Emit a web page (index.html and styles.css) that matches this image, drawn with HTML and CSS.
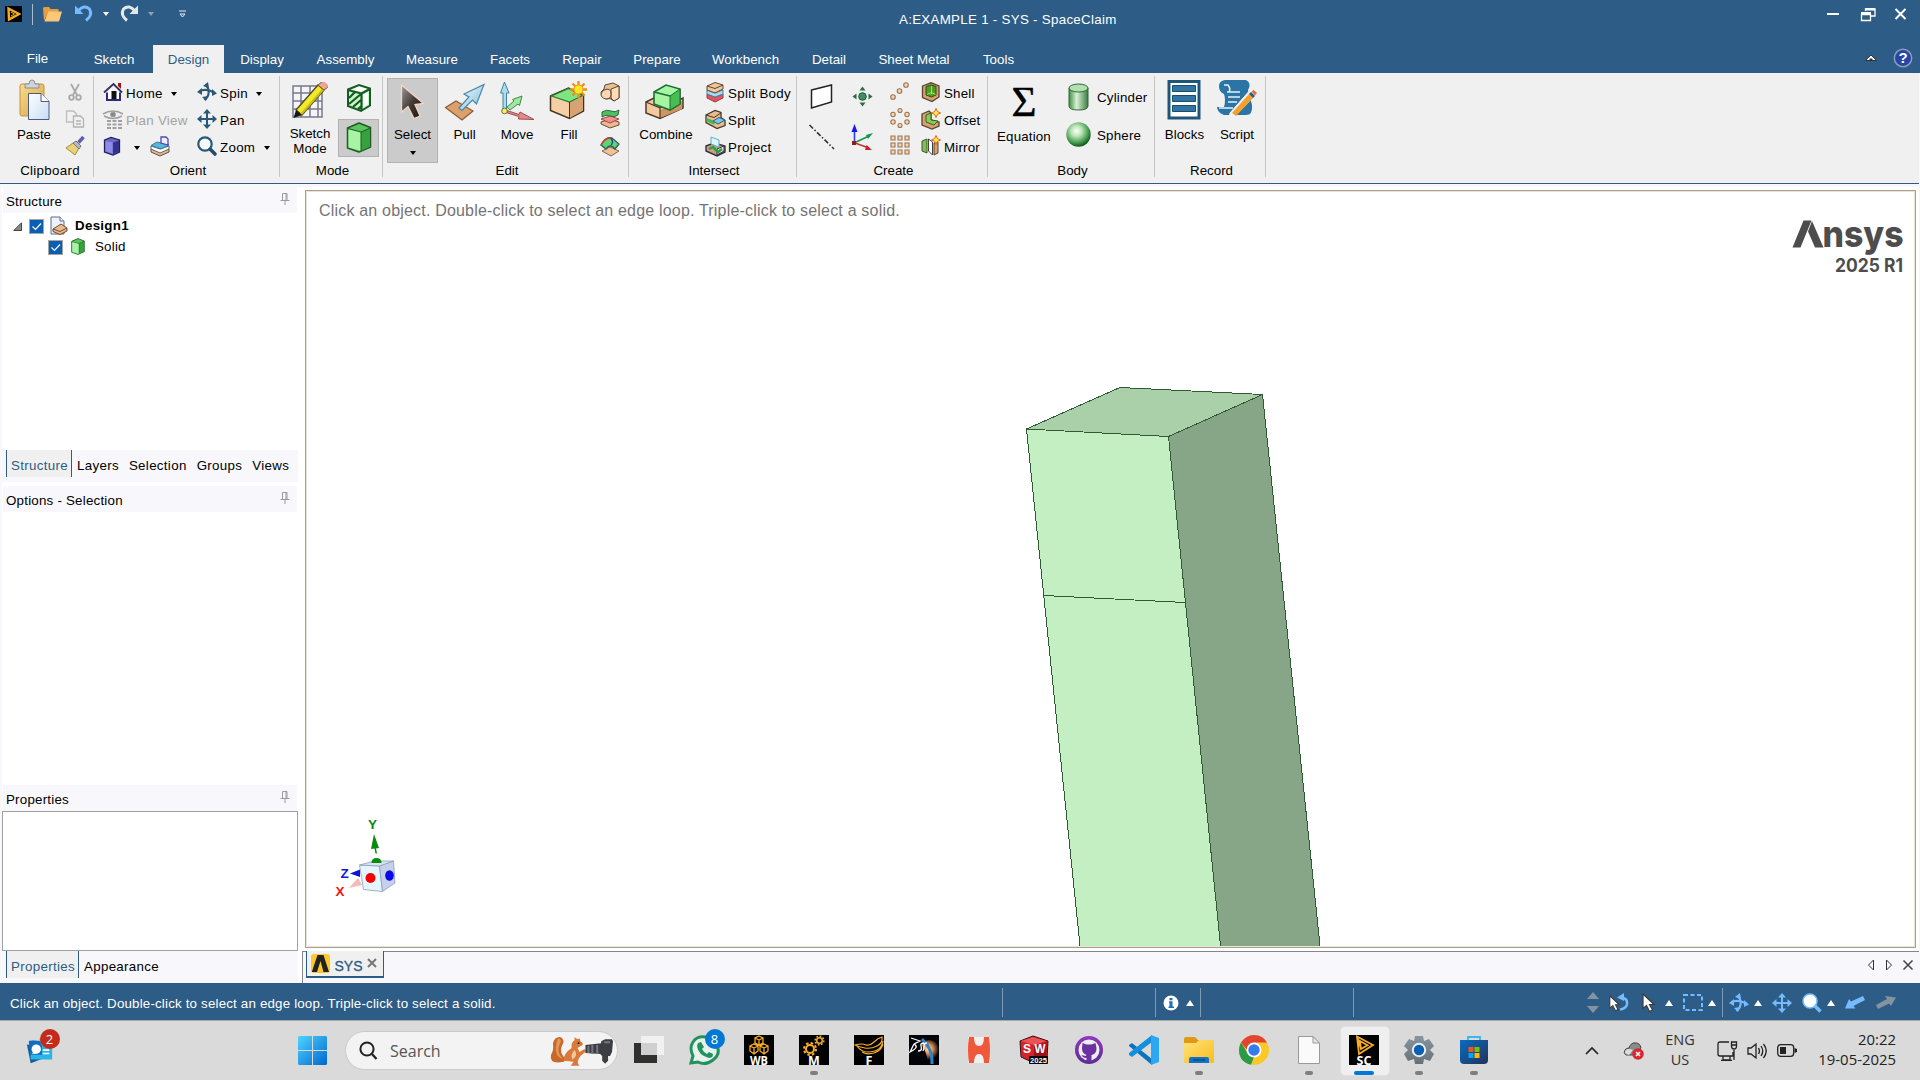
FILE: index.html
```html
<!DOCTYPE html>
<html lang="en">
<head>
<meta charset="utf-8">
<title>A:EXAMPLE 1 - SYS - SpaceClaim</title>
<link rel="stylesheet" href="styles.css">
</head>
<body>
<svg class="defs" width="0" height="0" aria-hidden="true">
  <defs>
    <linearGradient id="gold" x1="0" y1="0" x2="1" y2="1"><stop offset="0" stop-color="#f7dc8e"/><stop offset="1" stop-color="#d9a441"/></linearGradient>
    <linearGradient id="page" x1="0" y1="0" x2="1" y2="1"><stop offset="0" stop-color="#fff"/><stop offset="1" stop-color="#c9dcf5"/></linearGradient>
    <linearGradient id="arrowDark" x1="0" y1="0" x2="1" y2="1"><stop offset="0" stop-color="#a09a98"/><stop offset=".5" stop-color="#453a36"/><stop offset="1" stop-color="#17100c"/></linearGradient>
    <linearGradient id="ice" x1="0" y1="0" x2="1" y2="1"><stop offset="0" stop-color="#f2fcff"/><stop offset="1" stop-color="#7fbcdc"/></linearGradient>
    <linearGradient id="cyl" x1="0" x2="1"><stop offset="0" stop-color="#3f8f45"/><stop offset=".4" stop-color="#d9f2d4"/><stop offset="1" stop-color="#3d7a41"/></linearGradient>
    <radialGradient id="ball" cx=".42" cy=".36" r=".62"><stop offset="0" stop-color="#fff"/><stop offset=".35" stop-color="#b9e6b6"/><stop offset=".8" stop-color="#3f9648"/><stop offset="1" stop-color="#1c5b26"/></radialGradient>
    <linearGradient id="win" x1="0" y1="0" x2="1" y2="1"><stop offset="0" stop-color="#4fd4ff"/><stop offset="1" stop-color="#0067cf"/></linearGradient>
    <linearGradient id="folder" x1="0" y1="0" x2="1" y2="1"><stop offset="0" stop-color="#ffe27a"/><stop offset="1" stop-color="#f9bd1d"/></linearGradient>
    <linearGradient id="gear" x1="0" y1="0" x2="0" y2="1"><stop offset="0" stop-color="#8a949c"/><stop offset="1" stop-color="#66717a"/></linearGradient>
    <linearGradient id="store" x1="0" y1="0" x2="1" y2="1"><stop offset="0" stop-color="#0a6cc0"/><stop offset="1" stop-color="#23325c"/></linearGradient>
    <linearGradient id="purple" x1="0" y1="0" x2="0" y2="1"><stop offset="0" stop-color="#9335c0"/><stop offset="1" stop-color="#5c2f92"/></linearGradient>
    <radialGradient id="flare" cx=".45" cy=".45" r=".55"><stop offset="0" stop-color="#ffe3bd"/><stop offset=".45" stop-color="#d58a52"/><stop offset="1" stop-color="#030409"/></radialGradient>
    <symbol id="spin" viewBox="0 0 20 20"><g fill="none" stroke="currentColor" stroke-width="2.1"><path d="M2.500 9.500C6 7 12 7.500 17 10.500"/><path d="M8 3c5 3 5 11-.5 15"/></g><path fill="currentColor" d="M0 10l5-4v7zM20 11.500l-5-4.500v7zM6 4l5-4 1 6zM5 15l6-1-2 5z"/></symbol>
    <symbol id="pan" viewBox="0 0 20 20"><path fill="none" stroke="currentColor" stroke-width="2" d="M10 3v14M3 10h14"/><path fill="currentColor" d="M10 0l4 4.500H6zM10 20l4-4.500H6zM0 10l4.500-4v8zM20 10l-4.500-4v8z"/></symbol>
    <symbol id="star" viewBox="0 0 12 12"><path fill="#fff04a" stroke="#e9661d" stroke-width="1.200" d="M6 .5l1.600 3.700L11.500 6 7.600 7.600 6 11.500 4.400 7.600.5 6l3.900-1.800z"/></symbol>
    <symbol id="solid" viewBox="0 0 26 31"><path fill="#5cc45c" stroke="#1d5a25" stroke-width="1.500" stroke-linejoin="round" d="M1.500 6L13 1l11.500 4.500V25L13 30 1.500 26z"/><path fill="#a8f3a5" d="M2.500 7.500L15 10v19L2.500 25.500z"/><path fill="#37a23d" d="M15 10l9-4v18.500L15 29z"/><path fill="none" stroke="#1d5a25" d="M2 6.500L15 10l9.500-4M15 10v19"/></symbol>
    <symbol id="pin" viewBox="0 0 10 12"><path fill="none" stroke="#9a9a9a" d="M2.500 7V.5h4.500V7M6 1v6M.5 7.500h9M5 8v4"/></symbol>
    <symbol id="cursor" viewBox="0 0 14 20"><path fill="#fff" stroke="#3c3c3c" stroke-width="1.200" d="M1 1v14.500l3.500-3 3 6 3-1.500-3-5.500h4.500z"/></symbol>
  </defs>
</svg>

<header class="titlebar">
  <div class="quick">
    <svg class="q-app" viewBox="0 0 17 16"><rect width="17" height="16" fill="#000"/><path d="M3.500 2.500L14 8 4 13.500z" fill="none" stroke="#f7ac1c" stroke-width="2.400"/><path d="M6 6l3.500 2L6 10" fill="none" stroke="#f7ac1c"/></svg>
    <span class="q-sep"></span>
    <svg class="q-folder" viewBox="0 0 19 16"><path fill="#e89c3c" d="M0 2.500Q0 1 1.500 1H6l1.500 2h8v3H5L1 15z"/><path fill="#fbc879" d="M5 5.500h14L16 15.500H1.500z"/></svg>
    <svg class="q-undo" viewBox="0 0 18 17"><path fill="none" stroke="#75bbff" stroke-width="3" d="M3 6Q9-1 14.500 4 18 10 11 15.500"/><path fill="#75bbff" d="M0 .5V9h8.500z"/></svg>
    <i class="down white"></i>
    <svg class="q-redo" viewBox="0 0 18 17"><path fill="none" stroke="#e4e7ea" stroke-width="3" d="M15 6Q9-1 3.500 4 0 10 7 15.500"/><path fill="#e4e7ea" d="M18 .5V9H9.500z"/></svg>
    <i class="down grey"></i>
    <svg class="q-more" viewBox="0 0 7 8"><path fill="none" stroke="#e8eef4" d="M0 1h7M1 4h5L3.500 7z"/></svg>
  </div>
  <div class="window-title">A:EXAMPLE 1 - SYS - SpaceClaim</div>
  <svg class="window-buttons" viewBox="0 0 82 14"><g fill="none" stroke="#fff" stroke-width="2"><path d="M0 7h12M68.500 2l10 10M78.500 2l-10 10" transform="translate(1 0)"/></g><path fill="none" stroke="#fff" stroke-width="1.300" d="M39.500 4V2h9.500v7h-4M35.500 7.500h9v6h-9z"/><path fill="#fff" d="M35 5h10v3H35zM39 1h10v2.500H39z"/></svg>
</header>

<nav class="tabs">
  <span class="file">File</span><span>Sketch</span><span class="active">Design</span><span>Display</span><span>Assembly</span><span>Measure</span><span>Facets</span><span>Repair</span><span>Prepare</span><span>Workbench</span><span>Detail</span><span>Sheet Metal</span><span>Tools</span>
  <svg class="tab-tools" viewBox="0 0 48 20"><path fill="#fff" stroke="#333" d="M.5 12.500L6 7l5.500 5.500z"/><path fill="#333" d="M4.500 10.500h3v2h-3z"/><circle cx="38" cy="10" r="8.700" fill="#2546a8" stroke="#8f9cb5" stroke-width="1.500"/><text x="38" y="15.200" text-anchor="middle" font-size="15" font-weight="bold" fill="#fff">?</text></svg>
</nav>

<section class="ribbon">
  <div class="group clipboard">
    <div class="body">
      <div class="big"><svg width="40" height="40" viewBox="0 0 40 40"><rect x="6" y="4" width="24" height="32" rx="2" fill="url(#gold)" stroke="#c9933a"/><path fill="#cfd4d8" stroke="#8a8f94" d="M11 8V4h4q0-4 3-4t3 4h4v4z"/><path fill="url(#page)" stroke="#4b5b82" d="M14.500 13.500H27l8 8v18H14.500z"/><path fill="#fff" stroke="#4b5b82" d="M27 13.500v8h8"/></svg><span>Paste</span></div>
      <div class="minis">
        <svg viewBox="0 0 20 20"><g fill="none" stroke="#a9a9a9" stroke-width="1.800"><path d="M6 2l6 11M14 2L8 13"/><circle cx="6.500" cy="15.500" r="2.300"/><circle cx="13.500" cy="15.500" r="2.300"/></g></svg>
        <svg viewBox="0 0 20 20"><path fill="#f0f0f0" stroke="#bdbdbd" stroke-width="1.300" d="M1.500 2h7l3 3v8h-10z"/><path fill="#f0f0f0" stroke="#b3b3b3" stroke-width="1.300" d="M8.500 7h7l3 3v8h-10zM11 12h5M11 15h5"/></svg>
        <svg viewBox="0 0 20 20"><path fill="#e9d37a" stroke="#a58a35" d="M1 12l7-5 6 5-4 7-5-4z"/><path fill="#b5b8c8" stroke="#777" d="M8 7l3-2 5 5-2 3z"/><path stroke="#5f60ad" stroke-width="3.500" d="M13.500 6.500L18.500 1"/></svg>
      </div>
    </div>
    <div class="label">Clipboard</div>
  </div>

  <div class="group orient">
    <div class="body">
      <div class="rows">
        <div class="row"><svg viewBox="0 0 20 20"><path fill="#fff" stroke="#2b2a80" stroke-width="2" d="M4 9v9h13V9"/><path fill="#f4f4ff" stroke="#30305c" stroke-width="1.800" d="M1 10.500L10.500 2 19 10.500"/><path fill="#a11" d="M15 1h3v6l-3-3z"/><path fill="#111" d="M8.500 9h5v8h-5z"/></svg><span>Home</span><i class="down"></i></div>
        <div class="row off"><svg viewBox="0 0 20 20"><g fill="none" stroke="#a0a0a0"><path stroke-width="1.500" d="M0 5q10-6 20 0M1 7q9 5 18 0"/><circle cx="10" cy="5.500" r="2.500" fill="#888"/><path stroke-width="2" stroke-dasharray="4 1.500" d="M4 12h16M4 15.500h16M4 19h16"/></g></svg><span>Plan View</span></div>
        <div class="row"><svg viewBox="0 0 20 20"><path fill="#6a6acc" stroke="#20205c" stroke-width="1.300" d="M1.500 4L8 1.500 16.500 4v12L10 19 1.500 16z"/><path fill="#8d8de8" d="M2.500 5l7 1.500v11l-7-2.300z"/><path fill="#33338d" d="M10 6.500L16 4.500v11L10 18z"/></svg><i class="down after-cube"></i><svg viewBox="0 0 20 20"><path fill="#e9b88a" stroke="#5e5145" d="M1 13v3l9 4 9-4v-3l-9 3z"/><path fill="#fff" stroke="#666" d="M1 10v3l9 4 9-4v-3l-9 3z"/><path fill="#58b6da" stroke="#377b9c" d="M1 9.500L7 6l12 3-8 4z"/><path fill="#eef" stroke="#4a4ab0" stroke-width="1.300" d="M11 1h5l2 2v6l-7-2z"/></svg></div>
      </div>
      <div class="rows right">
        <div class="row"><svg class="navy"><use href="#spin"/></svg><span>Spin</span><i class="down"></i></div>
        <div class="row"><svg class="navy"><use href="#pan"/></svg><span>Pan</span></div>
        <div class="row"><svg viewBox="0 0 20 20"><circle cx="8" cy="8" r="6.700" fill="#f4f9fc" stroke="#2b5878" stroke-width="2.200"/><path stroke="#234d6c" stroke-width="3.600" stroke-linecap="round" d="M13.500 13.500l4.500 4.500"/></svg><span>Zoom</span><i class="down"></i></div>
      </div>
    </div>
    <div class="label">Orient</div>
  </div>

  <div class="group mode">
    <div class="body">
      <div class="big two"><svg width="40" height="40" viewBox="0 0 40 40"><path fill="#f5f5f8" stroke="#777a8c" stroke-width="1.500" d="M3 6h29v31H3zM11 6v31M20 6v31M28 6v31M3 13h29M3 21h29M3 29h29"/><path fill="#f3e92b" stroke="#4a4620" stroke-width="1.300" d="M6 30L28 5l6 5-22 25z"/><path fill="#c9bc17" d="M10 34l22-25 2 1-22 25z"/><path fill="#e8b186" stroke="#7b5a42" d="M28 5l3-2.500q6 0 6.500 5L34 10z"/><path fill="#f29aa0" d="M31 3q2-2 5 0t1 5z"/><path fill="#171717" d="M3.500 38l2.500-8 6 5z"/></svg><span>Sketch<br>Mode</span></div>
      <div class="mode-switch">
        <svg width="26" height="30" viewBox="0 0 26 30"><path fill="#c8f6c4" stroke="#175a25" stroke-width="2" d="M2 6.500L13 2l11 3.500v17L15 28 2 23z"/><path fill="#fff" d="M5 7l8-3.500 8 2.500-6 2.500zM17.500 11L22 9v12l-4.500 3z"/><path stroke="#175a25" stroke-width="2.200" fill="none" d="M2 7l13.500 3.500V28M15.500 10.500L24 6M3 15l6-6M3 21l12-10M7 24l8-7M12 26l4-3"/></svg>
        <div class="pressed"><svg width="26" height="31"><use href="#solid"/></svg></div>
      </div>
    </div>
    <div class="label">Mode</div>
  </div>

  <div class="group edit">
    <div class="body">
      <div class="big select"><svg width="40" height="40" viewBox="0 0 40 40"><path fill="url(#arrowDark)" stroke="#f1d6c5" stroke-width="1.300" d="M8.500 5v27l6.500-5.500 6 12 6-2.500-5-11.500 8.500-1z"/></svg><span>Select</span><i class="down"></i></div>
      <div class="big"><svg width="40" height="40" viewBox="0 0 40 40"><path fill="#dca06a" stroke="#8c5c37" stroke-width="1.200" d="M.5 27.500L11 21l17 10-11 9z"/><path fill="url(#ice)" stroke="#4b86a6" stroke-width="1.200" d="M14 28l10-11-5-3L39 4.500 31.500 24l-4-4L17 30.500z"/></svg><span>Pull</span></div>
      <div class="big"><svg width="40" height="40" viewBox="0 0 40 40"><path fill="#a8dcf0" stroke="#4a809b" d="M6 30V13H3.500L7.500 2 12 13H9.500v17z"/><path fill="#9fe8a2" stroke="#3f8a48" d="M10 27l7-6-1.500-1.500 9.500-3.500-2.500 9.500-1.500-1.500-8 6z"/><path fill="#e08a8d" stroke="#a34b50" d="M10 30.500l12 4 1-2.500 14 7.500-15.500-.5.500-2.500-13-4z"/><circle cx="7.500" cy="31" r="2.800" fill="#f2ef6b" stroke="#77702b"/></svg><span>Move</span></div>
      <div class="big"><svg width="40" height="40" viewBox="0 0 40 40"><path fill="#f5cfa6" stroke="#453121" stroke-width="1.500" d="M1.500 16l18-8 15 7v16L20.500 38.500l-19-8z"/><path fill="#d8a373" d="M21 22.500l13-6.500v14.500L21 38z"/><path fill="#7ee580" stroke="#2b7535" stroke-width="1.200" d="M2.500 16l17-7.500 14 7L20.500 22z"/><path stroke="#453121" d="M20.500 22v16"/><path stroke="#ef8d1c" stroke-width="2.300" d="M29.500 1v17M21 9.500h17M23.500 3.500l12 12M35.500 3.500l-12 12"/><circle cx="29.500" cy="9.500" r="4.500" fill="#ffe81f" stroke="#f09a20"/></svg><span>Fill</span></div>
      <div class="minis">
        <svg viewBox="0 0 20 20"><path fill="#e9bf94" stroke="#5d4634" d="M5 3l8-2 6 3v12l-5 3-4-2.500L6 17l-4-3-1-4 3-3z"/><path fill="#ffdcb6" stroke="#5d4634" d="M11 7l8-3v12l-5 3-3-3z"/><path fill="#f7d7b4" stroke="#5d4634" d="M4 8q7-3 7 4 0 5-5 5-5-1-5-5 1-3 3-4z"/></svg>
        <svg viewBox="0 0 20 20"><path fill="#eab98c" stroke="#6a4c35" d="M1 13l9-3 9 3v3l-9 3-9-4z"/><path fill="#f58f93" stroke="#a8474b" d="M1 10l9-3 9 3-9 4z"/><path fill="#4fbf61" stroke="#247036" d="M2 3q5-3 9-1t8-1l-1 5q-4 3-8 1t-8 1z"/></svg>
        <svg viewBox="0 0 20 20"><path fill="#efc197" stroke="#8c6749" d="M2 15l8-4 9 4-8 5z"/><path fill="#5fd472" stroke="#2e5c5e" stroke-width="1.300" d="M1 9Q6 0 12 2l7 6-4 5Q10 7 6 13z"/><path fill="none" stroke="#d8342c" stroke-width="1.500" d="M1 9Q5 1 11 2"/><path fill="none" stroke="#26479a" stroke-width="1.500" d="M11 2q3 5 0 7"/></svg>
      </div>
    </div>
    <div class="label">Edit</div>
  </div>

  <div class="group intersect">
    <div class="body">
      <div class="big"><svg width="40" height="40" viewBox="0 0 40 40"><path fill="#f3caa0" stroke="#4c3827" stroke-width="1.500" d="M0 22l8-4 20 5 9-5v10L14 38.500 0 33z"/><path fill="#cb9566" d="M14 30l22-9v8L14 38z"/><path stroke="#4c3827" stroke-width="1.200" fill="none" d="M0 22l14 6v10M14 28l5-2"/><path fill="#a5f5a5" stroke="#1f6e30" stroke-width="1.600" d="M8 12l12-7 14 4v15l-10 6-16-6z"/><path fill="#48bc55" stroke="#1f6e30" d="M24 16l10-7v15l-10 6z"/><path fill="none" stroke="#1f6e30" stroke-width="1.300" d="M8 12l16 4"/></svg><span>Combine</span></div>
      <div class="rows">
        <div class="row"><svg viewBox="0 0 20 20"><path fill="#e05560" stroke="#933d44" d="M2 12l8 3 8-3v4l-8 4-8-4z"/><path fill="#a9dcf2" stroke="#4583a2" d="M2 8l8 3 8-3v4l-8 3-8-3z"/><path fill="#f0c79c" stroke="#5d4634" d="M2 4l8-3.500L18 3v4l-8 4-8-3z"/><path fill="none" stroke="#5d4634" d="M2 4l8 2.500L18 3"/></svg><span>Split Body</span></div>
        <div class="row"><svg viewBox="0 0 20 20"><path fill="#e9bc90" stroke="#45352a" stroke-width="1.300" d="M1 6l9-4.500 6 2v5l4 3v5l-8 3-11-6z"/><path fill="#42b45a" d="M1.500 9l8 3v4l-8-4z"/><path fill="#7cc6ea" stroke="#2a5f7d" d="M8 12l6-3.500 6 2.500-7 4z"/><path fill="none" stroke="#45352a" d="M1 6l8 2.500L16 4"/></svg><span>Split</span></div>
        <div class="row"><svg viewBox="0 0 20 20"><path fill="#cda078" stroke="#343044" stroke-width="1.400" d="M1 10l8-3 11 3v6l-8 4-11-5z"/><path fill="#e9eaf5" stroke="#343044" d="M12 13l7-3v5l-7 4z"/><path fill="none" stroke="#28a046" stroke-width="2.500" d="M4 13l4-2 5 5 4-3"/><path fill="#dff3fa" stroke="#5ab0cf" d="M6 1l8 3v7L6 8z"/></svg><span>Project</span></div>
      </div>
    </div>
    <div class="label">Intersect</div>
  </div>

  <div class="group create">
    <div class="body">
      <div class="pair"><svg viewBox="0 0 30 30"><path fill="#fff" stroke="#222" stroke-width="1.500" d="M5.500 9l20-5v17l-20 6z"/></svg><svg viewBox="0 0 30 30"><path stroke="#333" stroke-width="1.600" stroke-dasharray="5 2 1.500 2" d="M3.500 1L28 25"/></svg></div>
      <div class="pair"><svg viewBox="0 0 30 30"><circle cx="15.500" cy="15.500" r="3.800" fill="#3f8f63" stroke="#23573b"/><path fill="#2b6b4a" d="M15.500 5.500l3 4h-6zM15.500 25.500l3-4h-6zM5.500 15.500l4-3v6zM25.500 15.500l-4-3v6z"/></svg><svg viewBox="0 0 30 30"><path fill="none" stroke="#3a3af5" stroke-width="1.600" d="M7.500 19V6"/><path fill="none" stroke="#16934d" stroke-width="1.500" d="M7 19l15-7"/><path fill="none" stroke="#c83030" stroke-width="1.500" d="M8 19l14 5"/><path fill="#1717f0" d="M7.500 0l3 8h-6z"/><path fill="#16934d" d="M26 9l-5 6-2-4z"/><path fill="#c5242e" d="M25 26l-7 0 1.500-5z"/><rect x="5" y="17" width="4" height="4" fill="#8b1d1d"/></svg></div>
      <div class="minis peach">
        <svg viewBox="0 0 20 20"><circle cx="3" cy="16" r="2.300"/><circle cx="9.500" cy="10" r="2.300"/><circle cx="16" cy="4" r="2.300"/></svg>
        <svg viewBox="0 0 20 20"><circle cx="10" cy="2.500" r="2"/><circle cx="3" cy="6.500" r="2.200"/><circle cx="17" cy="6.500" r="2.200"/><circle cx="3" cy="14" r="2.200"/><circle cx="17" cy="14" r="2.200"/><circle cx="10" cy="17.500" r="2"/></svg>
        <svg viewBox="0 0 20 20"><path d="M1 1h4v4H1zM8 1h4v4H8zM15 1h4v4h-4zM1 8h4v4H1zM8 8h4v4H8zM15 8h4v4h-4zM1 15h4v4H1zM8 15h4v4H8zM15 15h4v4h-4z"/></svg>
      </div>
      <div class="rows">
        <div class="row"><svg viewBox="0 0 20 20"><path fill="#d7a16f" stroke="#594230" stroke-width="1.300" d="M1.500 4L10 .8 18 4v11l-7 4.500-9.500-4z"/><path fill="#4f9e24" stroke="#26500f" d="M5 4.500L10 3l5 1.500V13l-4.500 2L5 13z"/><path stroke="#a7dc73" fill="none" d="M10.500 4v8M6 12.500l4.500-2 4 2"/></svg><span>Shell</span></div>
        <div class="row"><svg viewBox="0 0 20 20"><path fill="#d7a16f" stroke="#594230" stroke-width="1.300" d="M1 5l7-3 2 2v7l8 2v4l-7 3-10-4z"/><path fill="#89c95e" stroke="#33671d" d="M5 6l5-2v7l7 1-4 4-8-3z"/><use href="#star" x="10" y="-1" width="10" height="10"/></svg><span>Offset</span></div>
        <div class="row"><svg viewBox="0 0 20 20"><path fill="#86b957" stroke="#395b27" d="M1 5l5-2v14l-5-2z"/><path fill="#fff" stroke="#444" d="M7.500 3l4 3v13l-4-4z"/><path fill="#d7a16f" stroke="#594230" d="M13 7l4-1v11l-4 2z"/><use href="#star" x="10" y="-1" width="10" height="10"/></svg><span>Mirror</span></div>
      </div>
    </div>
    <div class="label">Create</div>
  </div>

  <div class="group solids">
    <div class="body">
      <div class="big equation"><b class="sigma">Σ</b><span>Equation</span></div>
      <div class="shapes">
        <div class="row"><svg viewBox="0 0 27 30"><path fill="url(#cyl)" stroke="#2c6b35" d="M4 6v18q0 4 9.500 4t9.500-4V6z"/><ellipse cx="13.500" cy="6" rx="9.500" ry="4" fill="#b4dfb0" stroke="#2c6b35"/></svg><span>Cylinder</span></div>
        <div class="row"><svg viewBox="0 0 27 30"><circle cx="13.500" cy="14.500" r="12.200" fill="url(#ball)"/></svg><span>Sphere</span></div>
      </div>
    </div>
    <div class="label">Body</div>
  </div>

  <div class="group record">
    <div class="body">
      <div class="big"><svg width="40" height="40" viewBox="0 0 40 40"><path fill="#fff" stroke="#1e5679" stroke-width="3" d="M4 1.500h30v36.500H4z"/><path fill="#2f74a3" stroke="#1a4c6d" d="M7.500 5.500h23v6h-23zM7.500 15.500h23v6h-23zM7.500 25.500h23v6h-23z"/></svg><span>Blocks</span></div>
      <div class="big"><svg width="40" height="40" viewBox="0 0 40 40"><path fill="#2b75a6" d="M2 6q0-5 6-6h21q6 3 2 10l4 15q1 10-6 10H7q-7-3-7-8h7Q9 20 7 14 2 12 2 6z"/><path stroke="#e5f1fa" stroke-width="1.500" fill="none" d="M7 5h4q3 4 1 7M10 12h13M11 17h12M11 22h9M2 28h14"/><path fill="#f2f2f2" stroke="#f2f2f2" d="M12 40l1-7L34 9l5 5-21 22z"/><path fill="#f5a02b" d="M15 33l17-19 4 4-17 18z"/><path fill="#235d86" d="M32 14l2-2 4 4-2 2z"/><path fill="#e66a44" d="M34.500 11.500l2-1.500 3.500 3-2 2.500z"/></svg><span>Script</span></div>
    </div>
    <div class="label">Record</div>
  </div>
</section>

<main class="work">
  <aside class="side">
    <div class="panel-head"><span>Structure</span><svg><use href="#pin"/></svg></div>
    <div class="tree">
      <div class="node"><svg class="twisty" viewBox="0 0 9 9"><path fill="#8a8a8a" stroke="#444" d="M8.500.8v7.700H.8z"/></svg><i class="check"><svg viewBox="0 0 15 15"><path d="M3.500 7.500l3 3 5.500-6" fill="none" stroke="#fff" stroke-width="1.200"/></svg></i><svg class="ticon" viewBox="0 0 18 19"><path fill="#eef2fb" stroke="#5e6a92" d="M1 1h9l4 4v13H1z"/><path fill="#fff" stroke="#5e6a92" d="M10 1v4h4"/><path fill="#e9ba8a" stroke="#6d4d35" d="M3 13l8-5 6 4v3l-7 3.500-7-3z"/><path fill="none" stroke="#6d4d35" d="M3 13l7 2.500 7-3.500"/></svg><b>Design1</b></div>
      <div class="node child"><i class="check"><svg viewBox="0 0 15 15"><path d="M3.500 7.500l3 3 5.500-6" fill="none" stroke="#fff" stroke-width="1.200"/></svg></i><svg class="ticon"><use href="#solid"/></svg><span>Solid</span></div>
    </div>
    <div class="panel-tabs"><span class="active">Structure</span><span>Layers</span><span>Selection</span><span>Groups</span><span>Views</span></div>
    <div class="panel-head second"><span>Options - Selection</span><svg><use href="#pin"/></svg></div>
    <div class="options"></div>
    <div class="panel-head"><span>Properties</span><svg><use href="#pin"/></svg></div>
    <div class="properties"></div>
    <div class="panel-tabs last"><span class="active">Properties</span><span>Appearance</span></div>
  </aside>

  <div class="doc">
    <div class="viewport">
      <svg class="scene" viewBox="307 192 1607 754" width="1607" height="754">
        <g stroke="#2f5a33" stroke-width="1" stroke-linejoin="round" shape-rendering="crispEdges">
          <path fill="#c4efc3" d="M1026.500 429l142 7.500L1222 960h-140.500z"/>
          <path fill="#87a587" d="M1168.500 436.500l94-42L1321.500 960H1222z"/>
          <path fill="#a9d0a9" d="M1026.500 429l93.500-41.500 142.500 7-94 42z"/>
          <path d="M1043.500 595.500l141.500 7"/>
        </g>
        <text class="hint" x="319" y="216">Click an object. Double-click to select an edge loop. Triple-click to select a solid.</text>
        <g fill="#4d4d4d">
          <text class="brand" y="247"><tspan x="1793">A</tspan><tspan x="1822.500" textLength="81" lengthAdjust="spacingAndGlyphs">nsys</tspan></text>
          <path fill="#fff" d="M1790 218h34v31h-34z"/>
          <path d="M1792.500 247.500l11-27h8l-11 27zM1812 221l11.500 26.500h-8.500l-7-16z"/>
          <text class="release" x="1835" y="271.500" textLength="68" lengthAdjust="spacingAndGlyphs">2025 R1</text>
        </g>
        <g class="triad">
          <text x="368" y="829" fill="#0a8a0a">Y</text><text x="340.500" y="878" fill="#1414e0">Z</text><text x="335.500" y="896" fill="#ee1515">X</text>
          <path fill="#0a8a0a" d="M374 834l5 14-3 .5 1 5h-1.500l-1-5-3.500.5z"/>
          <path fill="#f7b9b9" d="M349 888l9-10 4 7z"/><path fill="#1010d8" d="M350 873.500l10-4v7.500z"/>
          <g stroke="#8e9cbd" stroke-width=".8"><path fill="#e4f6fd" d="M359.500 865l20 1 3 25.500-19-2z"/><path fill="#c7d0ea" d="M379.500 866l14-5 1.500 22-12.500 8.500z"/><path fill="#d5e4f3" d="M359.500 865l15-4h19l-14 5z"/></g>
          <path fill="#0a8a0a" d="M371.500 863q0-5 5-5t5 5z"/><circle cx="370.500" cy="878" r="5" fill="#f20000"/><ellipse cx="389.500" cy="875.500" rx="4.300" ry="5.300" fill="#0808e8"/>
        </g>
      </svg>
    </div>
    <div class="doc-tabs">
      <div class="doc-tab"><svg viewBox="0 0 19 19"><rect width="19" height="19" rx="3" fill="#ffc92a"/><path fill="#222" d="M.8 18L6.500 1h6L18 18h-5.500L9.500 7 6 18z"/></svg><span>SYS</span><svg class="x" viewBox="0 0 10 10"><path stroke="#777" stroke-width="2" d="M1 1l8 8M9 1L1 9"/></svg></div>
      <svg class="doc-nav" viewBox="0 0 48 12"><path fill="none" stroke="#333" d="M6.500 1v10L1.500 6zM19.500 1v10l5-5z"/><path stroke="#444" stroke-width="1.500" d="M36.500 1.500l9 9M45.500 1.500l-9 9"/></svg>
    </div>
  </div>
</main>

<footer class="status">
  <span class="msg">Click an object. Double-click to select an edge loop. Triple-click to select a solid.</span>
  <span class="cell blank"></span>
  <span class="cell info"><svg width="16" height="16" viewBox="0 0 16 16"><circle cx="8" cy="8" r="7.500" fill="#fff"/><path fill="#1f6fb5" d="M6.500 3h3v2.200h-3zM6 6.200h3.500v5.300H11V13H5.500v-1.500h1V7.600H6z"/></svg><i class="up"></i></span>
  <span class="cell third"></span>
  <span class="cell tools">
    <svg class="t1" viewBox="0 0 12 21"><path fill="#8493a0" d="M6 0l6 7H0zM6 21l6-7H0z"/></svg>
    <svg class="t2" viewBox="0 0 20 20"><path fill="none" stroke="#75bbff" stroke-width="2.500" d="M11 4.500q8 0 7 7-1 4-7 5"/><path fill="#75bbff" d="M8 4.500L15 0v8z"/><use href="#cursor" width="12" height="19" y="1"/></svg>
    <svg class="t3"><use href="#cursor"/></svg>
    <i class="up"></i>
    <svg class="t4" viewBox="0 0 20 17"><path fill="none" stroke="#75bbff" stroke-width="2" stroke-dasharray="4 2.500" d="M1 1h18v15H1z"/></svg>
    <i class="up"></i>
    <span class="bar"></span>
    <svg class="t5 sky"><use href="#spin"/></svg>
    <i class="up"></i>
    <svg class="t6 sky"><use href="#pan"/></svg>
    <svg class="t7" viewBox="0 0 20 20"><path stroke="#75bbff" stroke-width="3.500" d="M12 12l6.500 6.500"/><circle cx="8" cy="8" r="7" fill="#fff" stroke="#75bbff" stroke-width="1.500"/></svg>
    <i class="up"></i>
    <svg class="t8" viewBox="0 0 20 14"><path fill="#75bbff" d="M0 12.500L4 3l2 2.500L18 0l2 4L8.500 10l2 2.500z"/></svg>
    <svg class="t9" viewBox="0 0 20 14"><path fill="#8493a0" d="M20 1.500L9 0l2 3L0 9l2 4 11-5.500 2 2.500z"/></svg>
  </span>
</footer>

<div class="taskbar">
  <div class="widgets"><svg viewBox="0 0 30 32"><path fill="#155d8b" d="M1 9l4 20 16-6V12z"/><path fill="#1273c8" d="M3 5h13v19H5z"/><path fill="#56b85b" d="M14 2l4 4v6z"/><path fill="#28b5e8" d="M14 8h14v17H5V12z"/><path fill="#0f6cc0" d="M3 6q8-4 14 4v10H5z"/><circle cx="11" cy="14" r="5" fill="#fff"/><path fill="#fff" d="M6 19l3-3 2 3zM18 14h7v2h-7zM18 18h7v1.500h-7z"/></svg><span class="badge red">2</span></div>
  <svg class="start" viewBox="0 0 29 29"><path fill="url(#win)" d="M1 0h13v14H0V1zM15 0h13l1 1v13H15zM0 15h14v14H1l-1-1zM15 15h14v13l-1 1H15z"/></svg>
  <div class="search">
    <svg class="mag" viewBox="0 0 19 19"><circle cx="8" cy="8" r="6.600" fill="none" stroke="#222" stroke-width="2"/><path stroke="#222" stroke-width="2.300" d="M13 13l4.500 5"/></svg>
    <span>Search</span>
    <svg class="squirrel" viewBox="0 0 64 30"><path fill="#c7682d" d="M14 26Q-1 29 1 19 4 14 3 7 5 0 11 1q5 3 1 9-3 7 4 13z"/><path fill="#e59556" d="M8 2q5 1 2 6-4 8 3 15Q2 20 8 2z"/><path fill="#d9793a" d="M14 25q-1-7 8-13-1-6 3-8V1l3 2 2-1 1 3q3 2 2 4l-5 3 2 4 5-3 2 2-6 5-2 3q-2 4 1 7h-9l3-4z"/><path fill="#f3c8a0" d="M25 14q4 5-2 10-3-5 2-10z"/><circle cx="29" cy="7" r="1" fill="#111"/><path fill="#3c3e43" d="M36 9l16-2V5l4-2h7l1 2-1 11-2 4h-2v5l-3 3-3-3v-5l-2-2-15-1z"/><path fill="#74777e" d="M38 10h2v7h-2zM42 9h2v9h-2zM47 9h2v9h-2zM55 5h6v2h-6z"/></svg>
  </div>
  <div class="apps">
    <div class="app"><svg viewBox="0 0 30 30"><path fill="#30302f" d="M0 8h23v20H0z"/><path fill="#f5f5f5" opacity=".85" d="M7 1h23v19H7z"/><path fill="#cfcfcf" d="M7 8h16v12H7z"/></svg></div>
    <div class="app"><svg viewBox="0 0 30 30"><path fill="#e7f2ec" stroke="#22925e" stroke-width="3" d="M2 28l2-7Q0 13 4 7t12-5 12 9-4 14-15 2z"/><path fill="#22925e" d="M9 8l3-1 3 5-2 2q2 4 5 5l2-2 4 2q0 4-4 4Q9 20 8 11z"/></svg><span class="badge blue">8</span></div>
    <div class="app"><svg viewBox="0 0 30 30"><rect width="30" height="30"/><g fill="none" stroke="#f5ac27" stroke-width="1.300"><path d="M15 1l4 2v5l-4 2-4-2V3zM10 9l4 2v5l-4 3-4-3v-5zM20 9l4 2v5l-4 3-4-3v-5zM11 3l4 2 4-2M15 5v5M6 11l4 2 4-2M10 13v6M16 11l4 2 4-2M20 13v6"/></g><text x="15" y="30" text-anchor="middle" textLength="18" lengthAdjust="spacingAndGlyphs">WB</text></svg></div>
    <div class="app run"><svg viewBox="0 0 30 30"><rect width="30" height="30"/><g fill="none" stroke="#f5ac27"><circle cx="11" cy="14" r="4" stroke-width="2"/><circle cx="11" cy="14" r="6" stroke-width="2" stroke-dasharray="2.500 2.200"/><circle cx="20.500" cy="5.500" r="2.800" stroke-width="1.500"/><circle cx="20.500" cy="5.500" r="4.300" stroke-width="1.600" stroke-dasharray="1.800 1.500"/></g><text x="15" y="30" text-anchor="middle">M</text></svg></div>
    <div class="app"><svg viewBox="0 0 30 30"><rect width="30" height="30"/><g fill="none" stroke="#f5ac27" stroke-width="1.200"><path d="M1 10q7-2 11 0 4 1 8-3t8-5q1 6-5 9-6 3-12 2T1 10z"/><path d="M3 11q4 6 11 6 13 0 15-11M8 17q5 3 12 1 7-2 9-9"/></g><text x="15" y="30" text-anchor="middle">F</text></svg></div>
    <div class="app"><svg viewBox="0 0 30 30"><rect width="30" height="30" fill="#030409"/><circle cx="20" cy="15" r="10" fill="url(#flare)"/><path fill="#030409" d="M6 4q12 8 13 26H5z"/><path fill="none" stroke="#2a86c8" stroke-width="3" d="M13 4q11 10 10 25"/><g fill="none" stroke="#fff" stroke-width="1.300"><path d="M2 3l9 3-6 3M5 9q6 3-4 8l4-8M15 8q-4 0-3 3t0 4-3 1M18 8q-3 0-3 3t-1 5"/></g></svg></div>
    <div class="app"><svg viewBox="0 0 30 30"><path fill="#fafafa" opacity=".7" d="M4 2h22v26H4z"/><path fill="#f0583a" d="M5 2h5q0 9 5 9t5-9h5q2 13 0 26h-5q0-9-5-9t-5 9H5Q3 15 5 2z"/></svg></div>
    <div class="app"><svg viewBox="0 0 30 30"><path fill="#d5232b" stroke="#331013" d="M1 6L14 1l15 5-1 18-13 4L2 22z"/><path fill="#ef5252" d="M2 6l12-4 13 4-12 4z"/><path fill="#9b141c" d="M15 11l13-4-1 16-12 4z"/><g fill="#fff"><text class="sw" x="4" y="18">S</text><text class="sw" x="15.500" y="17.500" textLength="11" lengthAdjust="spacingAndGlyphs">W</text></g><rect x="10" y="21" width="19" height="8" rx="1"/><text class="tiny" x="11" y="28" textLength="17" lengthAdjust="spacingAndGlyphs">2025</text></svg></div>
    <div class="app"><svg viewBox="0 0 30 30"><circle cx="15" cy="15" r="14" fill="url(#purple)"/><circle cx="15" cy="15" r="10.500" fill="#eee"/><path fill="#6b31a0" d="M8.500 8l4 1.500h5l4-1.500 1 5q0 6-5 7v6h-5v-3q-4 0-5-3l4 1 1-1q-5-2-4.500-7z"/></svg></div>
    <div class="app"><svg viewBox="0 0 30 30"><path fill="#0c72bd" d="M0 10l3-2 20 16v6L0 11z"/><path fill="#1290dd" d="M0 20l3 2L23 7V0L0 18z"/><path fill="#2ba7f3" d="M22 0l8 3v24l-8 3z"/></svg></div>
    <div class="app run"><svg viewBox="0 0 30 30"><path fill="#dd9a12" d="M0 4q0-2 2-2h9l3 3h16v5H0z"/><path fill="url(#folder)" d="M0 8h12l3-3h15v22q0 1-1 1H1q-1 0-1-1z"/><path fill="#1272c3" d="M5 28v-4q0-2 2-2h16q2 0 2 2v4z"/><path stroke="#074d8c" stroke-width="1.500" d="M9 25h12"/></svg></div>
    <div class="app"><svg viewBox="0 0 30 30"><circle cx="15" cy="15" r="15" fill="#fbc927"/><path fill="#e24333" d="M15 15H8L2 7.500Q7 0 15 0q9 0 13 7.500H15z"/><path fill="#2b9a48" d="M2 7.500L9 19l6 3-3 7.700Q0 27 0 15q0-4 2-7.500z"/><circle cx="15" cy="15" r="7.500" fill="#fff"/><circle cx="15" cy="15" r="5.700" fill="#347bf0"/></svg></div>
    <div class="app run"><svg viewBox="0 0 30 30"><path fill="#fafafa" stroke="#999" d="M4.500 1.500H19l6.500 7v20h-21z"/><path fill="#e6e6e6" stroke="#999" d="M19 1.500V8h6.500z"/></svg></div>
    <div class="app current"><svg viewBox="0 0 30 30"><rect width="30" height="30"/><path fill="none" stroke="#f5ac27" stroke-width="1.800" d="M8 1.500L24 10 10 19zM11 6l7.500 4.200L12 14zM8 1.500l4 12.500"/><text x="15" y="30" text-anchor="middle">SC</text></svg></div>
    <div class="app run"><svg viewBox="0 0 30 30"><path fill="url(#gear)" d="M11 1h8l1 5 5-2 5 7-4 4 4 4-4 7-6-2-1 5h-8l-1-5-6 2-4-7 4-4-4-4 5-7 5 2z"/><circle cx="15" cy="15" r="7.200" fill="#e9eef2"/><circle cx="15" cy="15" r="5.200" fill="#0c60b0"/></svg></div>
    <div class="app run"><svg viewBox="0 0 30 30"><path fill="none" stroke="#39b8ee" stroke-width="1.800" d="M9 6V2h12v4"/><path fill="url(#store)" d="M1 5h28v20q0 4-4 4H5q-4 0-4-4z"/><path fill="#f35325" d="M9.500 12h5v5h-5z"/><path fill="#81bc06" d="M15.500 12h5v5h-5z"/><path fill="#05a6f0" d="M9.500 18h5v5h-5z"/><path fill="#ffba08" d="M15.500 18h5v5h-5z"/></svg></div>
  </div>
  <div class="tray">
    <svg class="chev" viewBox="0 0 14 8"><path fill="none" stroke="#222" stroke-width="1.700" d="M1 7l6-6 6 6"/></svg>
    <svg class="cloud" viewBox="0 0 21 18"><path fill="#8b8b8b" stroke="#444" d="M3 13q-3-2-1-5 1-2 4-2 2-6 7-5 4 0 5 5l-8 7z"/><path fill="#dcdcdc" d="M3 12q-2-2 0-4t7 0l-4 5z"/><circle cx="15" cy="12" r="5.800" fill="#d9262e"/><path stroke="#fff" stroke-width="1.500" d="M13 10l4 4M17 10l-4 4"/></svg>
    <div class="lang">ENG<br>US</div>
    <svg class="net" viewBox="0 0 20 20"><g fill="none" stroke="#222" stroke-width="1.300"><path d="M12 1H3Q1 1 1 3v10q0 2 2 2h13v-4M6 15v4h7v-4M4 19.300h11M17 9v10"/><path d="M14.500 1h5v4q0 3-2.500 3t-2.500-3zM14.500 4h5"/></g></svg>
    <svg class="vol" viewBox="0 0 20 18"><path fill="none" stroke="#222" stroke-width="1.300" d="M1 6h3l5-4v14l-5-4H1zM11.500 6q2 3 0 6M14 4q3.500 5 0 10M16.500 2q5.500 7 0 14"/></svg>
    <svg class="bat" viewBox="0 0 20 13"><rect x=".7" y=".7" width="16" height="11.600" rx="3" fill="none" stroke="#222" stroke-width="1.300"/><path fill="#222" d="M3 3h6v7H3zM17.500 4l2.500 1v3l-2.500 1z"/></svg>
    <div class="clock">20:22<br>19-05-2025</div>
  </div>
</div>
</body>
</html>
```
FILE: styles.css
```css
* { box-sizing: border-box; }
body {
  margin: 0; width: 1920px; height: 1080px; overflow: hidden;
  display: flex; flex-direction: column; background: #f7f7fc; color: #000;
  font: 13.33px/16px "Liberation Sans", Arial, sans-serif;
}
svg { display: block; flex: none; overflow: visible; }
.defs { position: absolute; }

.down, .up { width: 0; height: 0; flex: none; border: 3.5px solid transparent; border-bottom: 0; border-top: 4px solid #000; }
.down.white { border-top-color: #fff; }
.down.grey { border-top-color: #8ba0b3; }
.up { border: 4.5px solid transparent; border-top: 0; border-bottom: 6px solid #fff; }

/* Title bar */
.titlebar { height: 45px; flex: none; background: #2d5c86; color: #fff; display: grid; grid-template-columns: 899px 1fr 106px; align-items: start; }
.quick { display: flex; align-items: center; height: 27px; padding-left: 5px; }
.q-app { width: 17px; height: 16px; }
.q-sep { width: 1px; height: 21px; background: #a9bccd; margin: 2px 10px 0 10px; }
.q-folder { width: 19px; height: 16px; margin-right: 13px; }
.q-undo, .q-redo { width: 18px; height: 17px; margin-right: 10px; }
.q-redo { margin-left: 10.5px; }
.q-more { width: 7px; height: 8px; margin-left: 25px; }
.window-title { padding-top: 12px; letter-spacing: .29px; }
.window-buttons { width: 82px; height: 14px; margin: 7px 0 0 12px; }

.tabs { height: 28px; flex: none; background: #2d5c86; color: #fff; display: grid; grid-template-columns: 75px 78px 71px 76px 91px 82px 74px 70px 80px 97px 70px 100px 69px 1fr; text-align: center; line-height: 29px; }
.tabs .file { line-height: 27px; }
.tabs .active { background: #f0f0f0; color: #2d5c86; }
.tab-tools { width: 48px; height: 20px; margin: 3px 7px 0 0; justify-self: end; }

/* Ribbon */
.ribbon { height: 111px; flex: none; display: flex; background: #f0f0f0; border-bottom: 1px solid #2d5c86; margin-right: 1px; }
.group { flex: none; height: 101px; margin-top: 3px; border-right: 1px solid #c6c6c6; }
.body { height: 86px; display: flex; }
.label { text-align: center; padding-left: 3px; line-height: 17px; }
.clipboard .label { padding-left: 7px; letter-spacing: .3px; }
.clipboard { width: 94px; } .orient { width: 186px; } .mode { width: 103px; } .edit { width: 246px; }
.intersect { width: 168px; } .create { width: 191px; } .solids { width: 167px; } .record { width: 111px; }
.clipboard .body { padding-left: 8px; }
.orient .body { padding-left: 9px; }
.mode .body, .edit .body, .solids .body, .record .body { padding-left: 4px; }
.intersect .body { padding-left: 5px; }
.create .body { padding-left: 9px; }

.big { width: 52px; padding-top: 4px; display: flex; flex-direction: column; align-items: center; flex: none; text-align: center; }
.big span { margin-top: 7px; white-space: nowrap; }
.big.two span { line-height: 15px; margin-top: 6px; }
.big.select { width: 51px; height: 85px; margin-top: 2px; padding-top: 1px; background: #cbcbcb; border: 1px solid #b2b2b2; }
.big.select .down { margin-top: 8px; }
.edit .big:nth-child(2) { width: 53px; }
.intersect .big, .equation { width: 64px; }
.record .big { width: 51px; }
.record .big:last-child { width: 54px; }
.sigma { height: 40px; font: 43px/44px "Liberation Serif", serif; -webkit-text-stroke: .4px #000; }
.equation span { margin-top: 9px; letter-spacing: .15px; }

.minis { width: 30px; padding-top: 2px; display: flex; flex-direction: column; align-items: center; }
.minis svg { width: 20px; height: 20px; margin: 4px 0 3px; }
.edit .minis { width: 29px; }
.minis.peach { width: 26px; margin-left: 10px; padding-top: 1px; }
.peach svg { fill: #f7d5b2; stroke: #9b7552; stroke-width: 1.1; }
.rows { padding-top: 4px; flex: none; }
.row { display: flex; align-items: center; height: 27px; white-space: nowrap; letter-spacing: .3px; }
.rows .row > svg { width: 20px; height: 20px; margin: 0 2px 3px 0; }
.row .down { margin-left: 8.5px; }
.row .down.after-cube { margin: 0 10px 0 9px; }
.orient .rows { width: 93px; }
.orient .rows:first-child span { margin-left: 1px; }
.orient .rows.right .row > svg { margin: 0 3px 3px 1px; }
.off { color: #a3a3a3; }
.navy { color: #2b5878; }
.intersect .rows { margin-left: 6px; }
.create .rows { margin-left: 7px; }
.intersect .row > svg, .create .row > svg { margin: 0 3px 3px 1px; }
.create .row { letter-spacing: .2px; }
.pair { width: 30px; padding-top: 5px; }
.pair svg { width: 30px; height: 30px; margin-bottom: 13px; }
.pair + .pair { margin-left: 11px; }
.shapes { padding-top: 3px; margin-left: 9px; }
.shapes .row { height: 38px; letter-spacing: .2px; }
.shapes .row svg { width: 27px; height: 30px; margin: 0 5px 3px 0; }
.mode-switch { margin-left: 2px; padding-top: 7px; width: 41px; }
.mode-switch > svg { margin: 0 auto 6px; }
.pressed { height: 38px; background: #cbcbcb; border: 1px solid #b2b2b2; padding: 2px 0 0 7px; }

/* Work area */
.work { height: 799px; flex: none; display: flex; padding-top: 3px; background: #f7f7fc; }
.side { width: 302px; flex: none; background: #fff; border-left: 2px solid #f7f7fc; letter-spacing: .22px; }
.panel-head { height: 26px; width: 294px; margin-left: 1px; padding: 3px 7px 0 3px; background: #f7f7fc; display: flex; justify-content: space-between; align-items: center; }
.panel-head svg { width: 10px; height: 12px; margin-bottom: 5px; }
.panel-head.second { margin-top: 4px; }
.tree { height: 237px; padding-top: 3px; }
.node { height: 20px; display: flex; align-items: center; padding-left: 11px; }
.node.child { padding-left: 46px; margin-top: 1px; }
.twisty { width: 9px; height: 9px; margin-right: 7px; }
.check { width: 15px; height: 15px; background: #0a5fb4; outline: 1px solid #a9a59c; outline-offset: -1px; }
.ticon { width: 18px; height: 19px; margin: 0 7px 2px 6px; }
.node b { letter-spacing: .3px; }
.child .ticon { width: 16px; height: 17px; margin: 0 9px 2px 7px; }
.panel-tabs { height: 32px; width: 296px; background: #f7f7fc; padding-left: 4px; display: flex; line-height: 31px; white-space: nowrap; letter-spacing: .32px; }
.panel-tabs span { margin-right: 10px; }
.panel-tabs .active { height: 27px; margin-right: 5px; padding: 0 3px 0 4px; color: #2d5c86; background: #f0f0f0; border: solid #2d5c86; border-width: 0 1px; }
.options { height: 273px; }
.properties { height: 140px; width: 296px; border: 1px solid #a0a0a0; }

.doc { flex: 1; padding-top: 3px; background: #fff; border-right: 1px solid #f7f7fc; }
.viewport { width: 1611px; height: 758px; margin-left: 3px; border: 1px solid #a5a293; outline: 1px solid #e9e5d2; outline-offset: -2px; padding: 1px; background: #fff; overflow: hidden; }
.viewport .scene { overflow: hidden; }
.hint { font-size: 16px; fill: #747474; letter-spacing: .19px; }
.brand { font: 800 37px Inter, sans-serif; }
.release { font: 700 19px Inter, sans-serif; }
.triad text { font: bold 13.500px "Liberation Sans", sans-serif; }
.doc-tabs { height: 32px; margin-top: 3px; padding-left: 3px; background: #f7f7fc; border: solid #85858b; border-width: 1px 0 0 1px; display: flex; justify-content: space-between; }
.doc-tab { width: 78px; height: 27px; margin-top: -1px; padding: 1px 6px 2px 4px; display: flex; align-items: center; background: #f0f0f0; border: solid #2d5c86; border-width: 0 1px 2px; color: #2d5c86; font-size: 14px; }
.doc-tab svg { width: 19px; height: 19px; margin-right: 4.5px; }
.doc-tab span { padding-top: 6px; -webkit-text-stroke: .3px #2d5c86; }
.doc-tab .x { width: 10px; height: 10px; margin: 0 0 0 4.5px; }
.doc-nav { width: 48px; height: 12px; margin: 7px 4px 0 0; }

/* Status bar */
.status { height: 37px; flex: none; background: #2d5c86; color: #fff; display: flex; align-items: center; }
.msg { width: 1002px; padding: 4px 0 0 10px; letter-spacing: .178px; }
.cell { height: 29px; margin-top: 2px; border-left: 1px solid #7f9bb4; display: flex; align-items: center; flex: none; }
.blank { width: 153px; }
.info { width: 45px; padding-left: 7px; gap: 7px; }
.third { width: 153px; }
.tools { width: 567px; padding-left: 233px; }
.bar { width: 1px; height: 29px; background: #7f9bb4; margin: 0 6px 0 5.5px; }
.sky { color: #75bbff; }
.t1 { width: 12px; height: 21px; margin-right: 10px; }
.t2 { width: 20px; height: 20px; margin-right: 13px; }
.t3 { width: 14px; height: 20px; margin-right: 9px; }
.t4 { width: 20px; height: 17px; margin: 0 5px 0 10px; }
.t5 { width: 20px; height: 20px; margin-right: 5px; }
.t6 { width: 20px; height: 20px; margin: 0 10px; }
.t7 { width: 20px; height: 20px; margin-right: 5px; }
.t8 { width: 20px; height: 14px; margin: 0 11px 0 10px; }
.t9 { width: 20px; height: 14px; }

/* Taskbar */
.taskbar { height: 60px; flex: none; background: #dadada; border-top: 1px solid #a8a8a8; display: flex; align-items: center; font-family: "Open Sans", "Noto Sans", sans-serif; color: #222; }
.widgets { width: 298px; padding-left: 26px; position: relative; }
.widgets svg { width: 28px; height: 32px; }
.badge { position: absolute; width: 20px; height: 20px; border-radius: 50%; color: #fff; text-align: center; font-size: 13px; line-height: 20px; }
.badge.red { left: 39.500px; top: -6px; background: #c42b1c; }
.badge.blue { left: 28px; top: 8px; background: #0078d4; }
.start { width: 29px; height: 29px; }
.search { width: 273px; height: 39px; margin-left: 18px; border-radius: 20px; background: #f3f3f3; border: 1px solid #c9c9c9; display: flex; align-items: center; font-size: 16px; color: #555; }
.mag { width: 19px; height: 19px; margin: 0 12px 0 13px; }
.squirrel { width: 63px; height: 30px; margin-left: auto; margin-right: 4px; }
.apps { display: flex; margin-left: 3.500px; }
.app { width: 55px; height: 59px; flex: none; position: relative; display: flex; align-items: center; justify-content: center; }
.app svg { width: 30px; height: 30px; margin-top: -1px; position: relative; }
.app text { fill: #fff; font: bold 12.500px "Open Sans", sans-serif; }
.app .tiny { font: bold 7.500px "Liberation Sans", sans-serif; }
.app .sw { font: bold 12px "Liberation Sans", sans-serif; }
.app.run::after, .app.current::after { content: ""; position: absolute; bottom: 5px; width: 8px; height: 4px; border-radius: 2px; background: #7e7e7e; }
.app.current::after { width: 20px; background: #0078d4; }
.app.current::before { content: ""; position: absolute; top: 5px; left: 3px; width: 48px; height: 48px; border-radius: 5px; background: #efefef; border: 1px solid #e2e2e2; }
.tray { margin-left: auto; padding-right: 24px; display: flex; align-items: center; }
.chev { width: 14px; height: 8px; margin-right: 24px; }
.cloud { width: 21px; height: 18px; margin-right: 18px; }
.lang { width: 36px; text-align: center; font-size: 14.500px; line-height: 20px; margin: -2px 19px 0 0; color: #333; }
.net { width: 20px; height: 20px; margin-right: 10px; }
.vol { width: 20px; height: 18px; margin-right: 10px; }
.bat { width: 20px; height: 13px; margin-right: 20px; }
.clock { width: 79px; text-align: right; white-space: nowrap; font-size: 14.900px; line-height: 20px; margin-top: -3px; }
```
